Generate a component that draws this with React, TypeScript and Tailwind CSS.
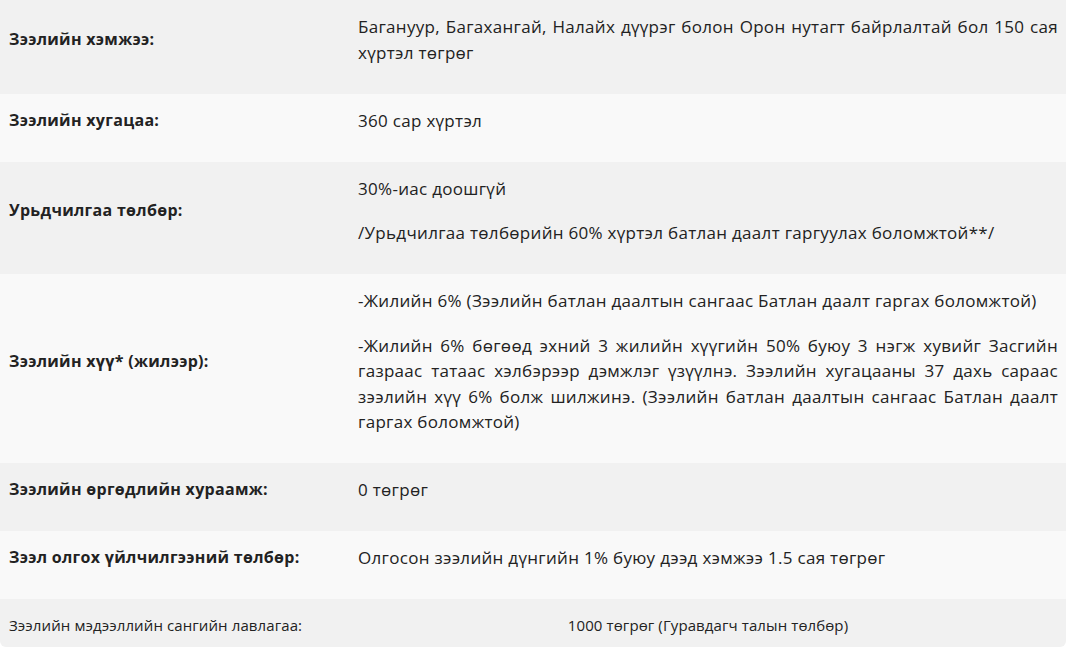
import React from "react";

type Row = {
  label: string;
  values: string[];
  justify?: boolean;
};

const rows: Row[] = [
  {
    label: "Зээлийн хэмжээ:",
    values: [
      "Багануур, Багахангай, Налайх дүүрэг болон Орон нутагт байрлалтай бол 150 сая хүртэл төгрөг",
    ],
    justify: true,
  },
  { label: "Зээлийн хугацаа:", values: ["360 сар хүртэл"] },
  {
    label: "Урьдчилгаа төлбөр:",
    values: [
      "30%-иас доошгүй",
      "/Урьдчилгаа төлбөрийн 60% хүртэл батлан даалт гаргуулах боломжтой**/",
    ],
  },
  {
    label: "Зээлийн хүү* (жилээр):",
    values: [
      "-Жилийн 6% (Зээлийн батлан даалтын сангаас Батлан даалт гаргах боломжтой)",
      "-Жилийн 6% бөгөөд эхний 3 жилийн хүүгийн 50% буюу 3 нэгж хувийг Засгийн газраас татаас хэлбэрээр дэмжлэг үзүүлнэ. Зээлийн хугацааны 37 дахь сараас зээлийн хүү 6% болж шилжинэ. (Зээлийн батлан даалтын сангаас Батлан даалт гаргах боломжтой)",
    ],
    justify: true,
  },
  { label: "Зээлийн өргөдлийн хураамж:", values: ["0 төгрөг"] },
  {
    label: "Зээл олгох үйлчилгээний төлбөр:",
    values: ["Олгосон зээлийн дүнгийн 1% буюу дээд хэмжээ 1.5 сая төгрөг"],
  },
];

export default function App() {
  return (
    <div className="min-h-screen bg-white font-['Open_Sans',sans-serif] text-[#222]">
      <div className="w-[1066px] overflow-hidden rounded-b-md">
        {rows.map((row, i) => (
          <div
            key={row.label}
            className={`grid grid-cols-[350px_1fr] ${
              i % 2 === 0 ? "bg-[#f1f1f1]" : "bg-[#f9f9f9]"
            }`}
          >
            <div className="flex items-center pl-[9px] pr-2 pt-[14px] pb-[28.5px]">
              <span className="text-[16px] font-bold leading-[25px] tracking-[0.3px]">
                {row.label}
              </span>
            </div>
            <div className="flex flex-col gap-[19px] pl-2 pr-2 pt-[14px] pb-[28.5px] text-[17px] leading-[25.5px] tracking-[0.3px]">
              {row.values.map((v) => (
                <p key={v} className={row.justify ? "text-justify" : ""}>
                  {v}
                </p>
              ))}
            </div>
          </div>
        ))}

        {/* last row: smaller type, value centred */}
        <div className="grid grid-cols-[350px_1fr] bg-[#f1f1f1] text-[15px] leading-[20px] tracking-[0.1px]">
          <div className="pl-[9px] pt-[16px] pb-[12px]">
            Зээлийн мэдээллийн сангийн лавлагаа:
          </div>
          <div className="pt-[16px] pb-[12px] text-center">
            1000 төгрөг (Гуравдагч талын төлбөр)
          </div>
        </div>
      </div>
    </div>
  );
}
